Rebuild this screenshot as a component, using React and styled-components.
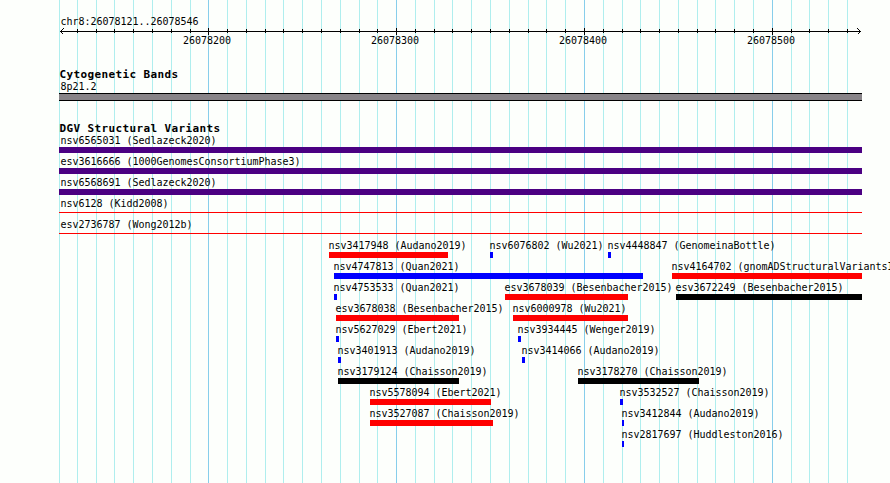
import React from "react";
import styled, { createGlobalStyle } from "styled-components";

const GlobalStyle = createGlobalStyle`
  html, body { margin: 0; padding: 0; background: #fdfffc; }
  body { overflow: hidden; }
`;

const TRACK_LEFT = 59;

const Panel = styled.main`
  display: grid;
  width: 890px;
  height: 483px;
  overflow: hidden;
  background: #fdfffc;
  color: #000;
  font-family: "DejaVu Sans Mono", "Liberation Mono", monospace;
  font-size: 10px;
  letter-spacing: -0.02px;
`;

const GridLines = styled.div`
  grid-area: 1 / 1;
  display: grid;
  grid-template-columns: repeat(831, 1px);
  padding-left: ${TRACK_LEFT}px;
`;

const GridLine = styled.i`
  grid-row: 1;
  grid-column: ${(p) => p.$x - TRACK_LEFT + 1};
  background: ${(p) => (p.$major ? "#87ceeb" : "#afeeee")};
`;

const Tracks = styled.div`
  grid-area: 1 / 1;
  min-width: 0;
  display: flex;
  flex-direction: column;
  padding-left: ${TRACK_LEFT}px;
`;

const Ruler = styled.section`
  height: 67px;
  padding-top: 15px;
  box-sizing: border-box;
`;

const Label = styled.div`
  height: 13px;
  line-height: 13px;
  white-space: pre;
  margin-left: ${(p) => p.$shift || 0}px;
`;

const Axis = styled.svg`
  display: block;
  width: 803px;
  height: 7px;
`;

const TickLabels = styled.div`
  display: grid;
  grid-template-columns: repeat(831, 1px);
  height: 11px;
  line-height: 11px;
`;

const TickLabel = styled.span`
  grid-row: 1;
  grid-column: ${(p) => p.$x - TRACK_LEFT + 1} / span 48;
`;

const Heading = styled.h2`
  margin: 0;
  height: 13px;
  line-height: 15px;
  font-size: 11px;
  letter-spacing: 0.377px;
  font-weight: 700;
  white-space: pre;
  text-indent: 0.5px;
`;

const BandTrack = styled.section`
  height: 54px;
`;

const Band = styled.div`
  box-sizing: border-box;
  width: 803px;
  height: 8px;
  border: solid #000;
  border-width: 1px 0;
  background: #888488;
`;

const VariantRow = styled.div`
  display: grid;
  grid-template-columns: repeat(831, 1px);
  height: 21px;
`;

const Variant = styled.div`
  grid-row: 1;
  grid-column: ${(p) => p.$x - TRACK_LEFT + 1} / span ${(p) => p.$w};
  min-width: 0;
`;

const Bar = styled.div`
  height: ${(p) => (p.$thin ? 1 : 6)}px;
  margin-top: ${(p) => (p.$thin ? 2 : 0)}px;
  background: ${(p) => p.$color};
`;

const MAJOR = [208, 396, 584, 772];
const LINES = [
  59, 77, 96, 114, 133, 152, 171, 190, 208, 227, 246, 265, 283, 302, 321, 340,
  359, 377, 396, 415, 434, 452, 471, 490, 509, 528, 546, 565, 584, 603, 622,
  640, 659, 678, 697, 715, 734, 753, 772, 791, 809, 828, 847,
];

const RED = "#ff0000";
const BLUE = "#0000ff";
const BLACK = "#000000";
const INDIGO = "#4b0082";

const ROWS = [
  [["nsv6565031 (Sedlazeck2020)", 59, 803, INDIGO]],
  [["esv3616666 (1000GenomesConsortiumPhase3)", 59, 803, INDIGO]],
  [["nsv6568691 (Sedlazeck2020)", 59, 803, INDIGO]],
  [["nsv6128 (Kidd2008)", 59, 803, RED, true]],
  [["esv2736787 (Wong2012b)", 59, 803, RED, true]],
  [
    ["nsv3417948 (Audano2019)", 329, 119, RED],
    ["nsv6076802 (Wu2021)", 490, 3, BLUE],
    ["nsv4448847 (GenomeinaBottle)", 608, 3, BLUE],
  ],
  [
    ["nsv4747813 (Quan2021)", 334, 309, BLUE],
    ["nsv4164702 (gnomADStructuralVariantsI", 672, 190, RED],
  ],
  [
    ["nsv4753533 (Quan2021)", 334, 3, BLUE],
    ["esv3678039 (Besenbacher2015)", 505, 123, RED],
    ["esv3672249 (Besenbacher2015)", 676, 186, BLACK],
  ],
  [
    ["esv3678038 (Besenbacher2015)", 336, 123, RED],
    ["nsv6000978 (Wu2021)", 513, 115, RED],
  ],
  [
    ["nsv5627029 (Ebert2021)", 336, 3, BLUE],
    ["nsv3934445 (Wenger2019)", 518, 3, BLUE],
  ],
  [
    ["nsv3401913 (Audano2019)", 338, 3, BLUE],
    ["nsv3414066 (Audano2019)", 522, 3, BLUE],
  ],
  [
    ["nsv3179124 (Chaisson2019)", 338, 121, BLACK],
    ["nsv3178270 (Chaisson2019)", 578, 121, BLACK],
  ],
  [
    ["nsv5578094 (Ebert2021)", 370, 121, RED],
    ["nsv3532527 (Chaisson2019)", 620, 3, BLUE],
  ],
  [
    ["nsv3527087 (Chaisson2019)", 370, 123, RED],
    ["nsv3412844 (Audano2019)", 622, 2, BLUE],
  ],
  [["nsv2817697 (Huddleston2016)", 622, 2, BLUE]],
];

const TICKS = [
  ["26078200", 183],
  ["26078300", 371],
  ["26078400", 559],
  ["26078500", 747],
];

export default function App() {
  return (
    <>
      <GlobalStyle />
      <Panel>
        <GridLines>
          {LINES.map((x) => (
            <GridLine key={x} $x={x} $major={MAJOR.includes(x)} />
          ))}
        </GridLines>
        <Tracks>
          <Ruler>
            <Label $shift={1.5}>chr8:26078121..26078546</Label>
            <Axis viewBox="0 0 803 7" shapeRendering="crispEdges">
              <rect x="1" y="3" width="801" height="1" />
              {LINES.slice(1).map((x) => {
                const major = MAJOR.includes(x);
                return (
                  <rect
                    key={x}
                    x={x - TRACK_LEFT}
                    y={major ? 0 : 1}
                    width="1"
                    height={major ? 7 : 4}
                  />
                );
              })}
              <path d="M4.5 0.5L1.5 3.5L4.5 6.5M798.5 0.5L801.5 3.5L798.5 6.5" fill="none" stroke="#000" />
            </Axis>
            <TickLabels>
              {TICKS.map(([text, x]) => (
                <TickLabel key={text} $x={x}>{text}</TickLabel>
              ))}
            </TickLabels>
          </Ruler>
          <BandTrack>
            <Heading>Cytogenetic Bands</Heading>
            <Label $shift={1.5}>8p21.2</Label>
            <Band />
          </BandTrack>
          <section>
            <Heading>DGV Structural Variants</Heading>
            {ROWS.map((row) => (
              <VariantRow key={row[0][0]}>
                {row.map(([name, x, w, color, thin]) => (
                  <Variant key={name} $x={x} $w={w}>
                    <Label $shift={x === TRACK_LEFT ? 1.5 : -0.5}>{name}</Label>
                    <Bar $color={color} $thin={thin} />
                  </Variant>
                ))}
              </VariantRow>
            ))}
          </section>
        </Tracks>
      </Panel>
    </>
  );
}
